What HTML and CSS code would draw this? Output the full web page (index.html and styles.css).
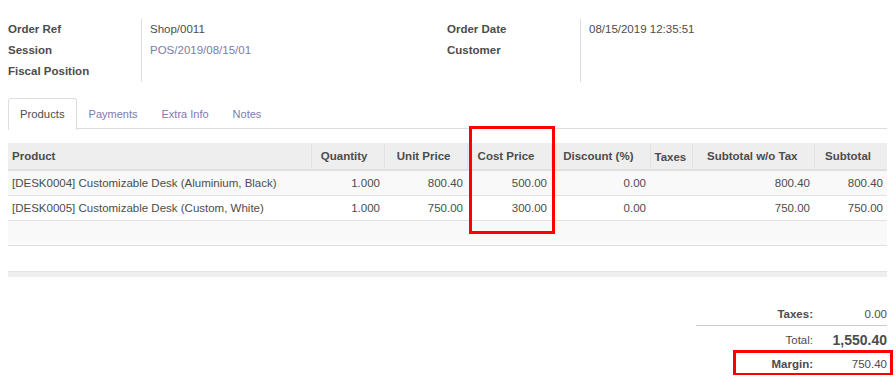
FILE: index.html
```html
<!DOCTYPE html>
<html>
<head>
<meta charset="utf-8">
<link rel="stylesheet" href="styles.css">
</head>
<body>
<div class="sheet">
  <div class="groups">
    <div class="group">
      <div class="lbl">Order Ref</div><div class="val">Shop/0011</div>
      <div class="lbl">Session</div><div class="val"><span class="link">POS/2019/08/15/01</span></div>
      <div class="lbl">Fiscal Position</div><div class="val"></div>
    </div>
    <div class="group">
      <div class="lbl">Order Date</div><div class="val">08/15/2019 12:35:51</div>
      <div class="lbl">Customer</div><div class="val"></div>
      <div class="lbl"></div><div class="val"></div>
    </div>
  </div>

  <div class="tabs">
    <div class="tab active">Products</div>
    <div class="tab">Payments</div>
    <div class="tab">Extra Info</div>
    <div class="tab">Notes</div>
  </div>

  <div class="annotated">
    <table class="lines">
      <colgroup>
        <col class="c-prod"><col class="c-qty"><col class="c-unit"><col class="c-cost"><col class="c-disc"><col class="c-tax"><col class="c-sub1"><col class="c-sub2">
      </colgroup>
      <thead>
        <tr>
          <th class="left">Product</th>
          <th>Quantity</th>
          <th>Unit Price</th>
          <th>Cost Price</th>
          <th>Discount (%)</th>
          <th class="left taxes">Taxes</th>
          <th>Subtotal w/o Tax</th>
          <th>Subtotal</th>
        </tr>
      </thead>
      <tbody>
        <tr>
          <td class="left">[DESK0004] Customizable Desk (Aluminium, Black)</td>
          <td>1.000</td><td>800.40</td><td>500.00</td><td>0.00</td><td class="left"></td><td>800.40</td><td>800.40</td>
        </tr>
        <tr>
          <td class="left">[DESK0005] Customizable Desk (Custom, White)</td>
          <td>1.000</td><td>750.00</td><td>300.00</td><td>0.00</td><td class="left"></td><td>750.00</td><td>750.00</td>
        </tr>
        <tr class="empty"><td colspan="8"></td></tr>
        <tr class="empty blank"><td colspan="8"></td></tr>
      </tbody>
      <tfoot>
        <tr><td colspan="8"></td></tr>
      </tfoot>
    </table>
    <div class="mark mark-cost"></div>
  </div>

  <div class="totals-wrap">
    <div class="totals">
      <div class="t-row t-taxes"><span class="t-lbl strong">Taxes:</span><span class="t-val">0.00</span></div>
      <div class="t-row t-total"><span class="t-lbl">Total:</span><span class="t-val big">1,550.40</span></div>
      <div class="t-row t-margin"><span class="t-lbl strong">Margin:</span><span class="t-val">750.40</span></div>
      <div class="mark mark-margin"></div>
    </div>
  </div>
</div>
</body>
</html>
```

FILE: styles.css
```css
html, body {
  margin: 0;
  padding: 0;
  background: #fff;
}
body {
  font-family: "Liberation Sans", Arial, sans-serif;
  font-size: 11.5px;
  color: #4c4c4c;
}
.sheet {
  width: 879px;
  padding: 0 9px 0 8px;
}

/* form groups */
.groups {
  display: grid;
  grid-template-columns: 439px 440px;
  padding-top: 19px;
}
.group {
  display: grid;
  grid-template-columns: 134px 1fr;
  grid-auto-rows: 21px;
}
.lbl {
  font-weight: bold;
  border-right: 1px solid #ddd;
  line-height: 21px;
}
.val {
  padding-left: 8px;
  line-height: 21px;
}
.link {
  color: #7c7bad;
}

/* tabs */
.tabs {
  display: flex;
  margin-top: 16px;
  border-bottom: 1px solid #ddd;
  height: 30px;
}
.tab {
  padding: 0 11px;
  line-height: 30px;
  font-size: 11px;
  color: #7c7bad;
  border: 1px solid transparent;
  border-bottom: none;
  border-radius: 3px 3px 0 0;
}
.tab.active {
  color: #4c4c4c;
  border-color: #ddd;
  background: #fff;
  height: 31px;
  font-size: 11.3px;
}

/* table */
.annotated {
  position: relative;
  margin-top: 14px;
}
.lines {
  width: 879px;
  border-collapse: collapse;
  table-layout: fixed;
}
.c-prod { width: 303px; }
.c-qty { width: 73px; }
.c-unit { width: 83px; }
.c-cost { width: 84px; }
.c-disc { width: 99px; }
.c-tax { width: 42px; }
.c-sub1 { width: 122px; }
.c-sub2 { width: 73px; }

.lines th {
  background: #eee;
  height: 24px;
  padding: 0 16px 0 4px;
  text-align: right;
  font-weight: bold;
  border-left: 1px solid #e2e2e2;
  border-bottom: 2px solid #e0e0e0;
  white-space: nowrap;
}
.lines th:first-child { border-left: none; }
.lines th.left { text-align: left; }
.lines th.taxes { padding: 2px 4px 0 4px; }
.lines td {
  height: 24px;
  padding: 0 4px;
  text-align: right;
  border-bottom: 1px solid #e1e1e1;
  white-space: nowrap;
}
.lines td.left { text-align: left; }
.lines tbody tr:nth-child(odd) td { background: #f9f9f9; }
.lines tbody tr.blank td { border-bottom: none; background: #fff; height: 25px; }
.lines tfoot td {
  height: 5px;
  padding: 0;
  background: #eee;
  border-top: 1px solid #e3e3e3;
  border-bottom: none;
}

/* red annotation marks */
.mark {
  position: absolute;
  border: 3px solid #ff0000;
  box-sizing: border-box;
}
.mark-cost {
  left: 461px;
  top: -17px;
  width: 86px;
  height: 108px;
}

/* totals */
.totals-wrap {
  display: flex;
  justify-content: flex-end;
  margin-top: 26px;
}
.totals {
  position: relative;
  width: 191px;
}
.t-row {
  display: grid;
  grid-template-columns: 117px 74px;
  align-items: center;
}
.t-lbl { text-align: right; }
.t-val { text-align: right; }
.strong { font-weight: bold; }
.t-taxes {
  height: 22px;
  border-bottom: 1px solid #ccc;
}
.t-total {
  height: 27px;
}
.big {
  font-size: 14px;
  font-weight: bold;
  color: #4c4c4c;
}
.t-margin {
  height: 22px;
}
.mark-margin {
  left: 37px;
  top: 47px;
  width: 160px;
  height: 26px;
}
```
